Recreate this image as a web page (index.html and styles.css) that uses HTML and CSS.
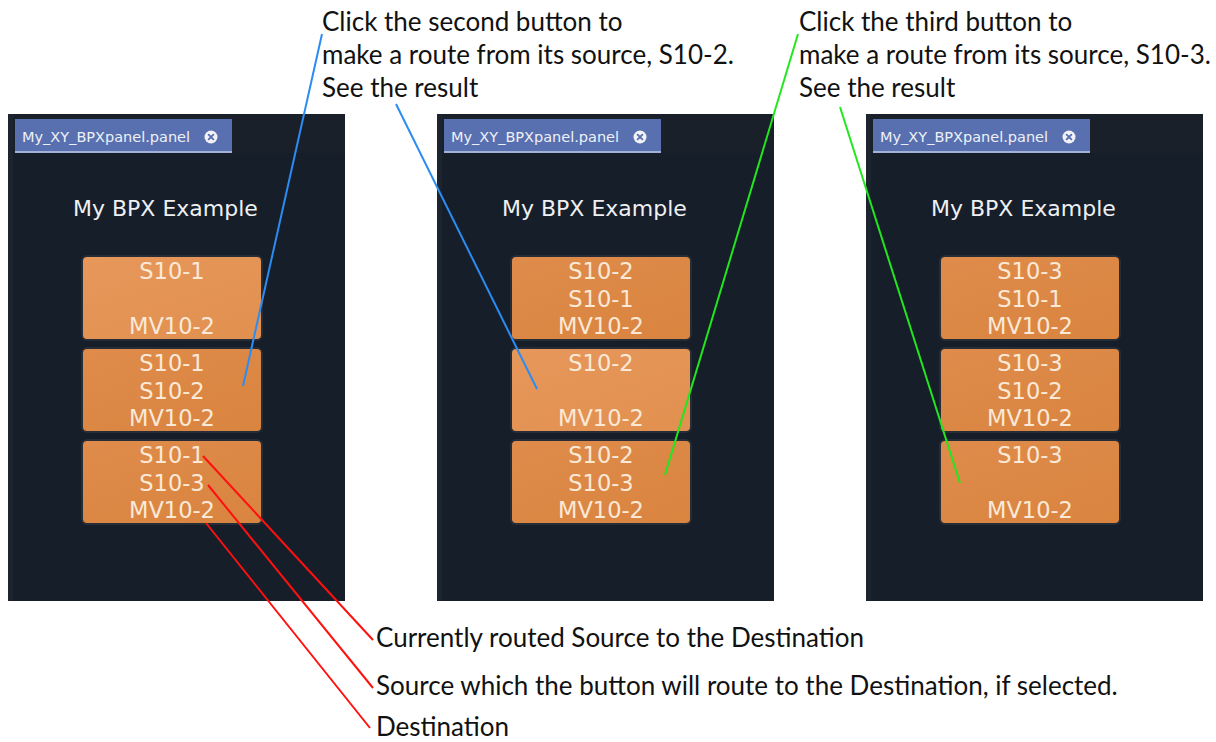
FILE: index.html
```html
<!DOCTYPE html>
<html lang="en">
<head>
    <meta charset="UTF-8">
    <meta name="viewport" content="width=device-width, initial-scale=1.0">
    <title>My BPX Example</title>
    <link rel="stylesheet" href="styles.css">
</head>
<body>
    <div class="page">
        <div class="notes">
            <div class="note note-second">Click the second button to<br>make a route from its source, S10-2.<br>See the result</div>
            <div class="note note-third">Click the third button to<br>make a route from its source, S10-3.<br>See the result</div>
        </div>

        <div class="panels">
            <div class="panel">
                <div class="tabbar">
                    <div class="tab">My_XY_BPXpanel.panel <span class="close"><svg width="14" height="14" viewBox="0 0 14 14"><circle cx="7" cy="7" r="6.5" fill="#f2f2f6"/><path d="M4.6 4.6 9.4 9.4M9.4 4.6 4.6 9.4" stroke="#5870b0" stroke-width="1.8" stroke-linecap="round"/></svg></span></div>
                </div>
                <div class="body">
                    <div class="title">My BPX Example</div>
                    <div class="btn light"><div>S10-1</div><div></div><div>MV10-2</div></div>
                    <div class="btn"><div>S10-1</div><div>S10-2</div><div>MV10-2</div></div>
                    <div class="btn"><div>S10-1</div><div>S10-3</div><div>MV10-2</div></div>
                </div>
            </div>
            <div class="panel">
                <div class="tabbar">
                    <div class="tab">My_XY_BPXpanel.panel <span class="close"><svg width="14" height="14" viewBox="0 0 14 14"><circle cx="7" cy="7" r="6.5" fill="#f2f2f6"/><path d="M4.6 4.6 9.4 9.4M9.4 4.6 4.6 9.4" stroke="#5870b0" stroke-width="1.8" stroke-linecap="round"/></svg></span></div>
                </div>
                <div class="body">
                    <div class="title">My BPX Example</div>
                    <div class="btn"><div>S10-2</div><div>S10-1</div><div>MV10-2</div></div>
                    <div class="btn light"><div>S10-2</div><div></div><div>MV10-2</div></div>
                    <div class="btn"><div>S10-2</div><div>S10-3</div><div>MV10-2</div></div>
                </div>
            </div>
            <div class="panel">
                <div class="tabbar">
                    <div class="tab">My_XY_BPXpanel.panel <span class="close"><svg width="14" height="14" viewBox="0 0 14 14"><circle cx="7" cy="7" r="6.5" fill="#f2f2f6"/><path d="M4.6 4.6 9.4 9.4M9.4 4.6 4.6 9.4" stroke="#5870b0" stroke-width="1.8" stroke-linecap="round"/></svg></span></div>
                </div>
                <div class="body">
                    <div class="title">My BPX Example</div>
                    <div class="btn"><div>S10-3</div><div>S10-1</div><div>MV10-2</div></div>
                    <div class="btn"><div>S10-3</div><div>S10-2</div><div>MV10-2</div></div>
                    <div class="btn"><div>S10-3</div><div></div><div>MV10-2</div></div>
                </div>
            </div>
        </div>

        <div class="labels">
            <div class="label label-current">Currently routed Source to the Destination</div>
            <div class="label label-source">Source which the button will route to the Destination, if selected.</div>
            <div class="label label-dest">Destination</div>
        </div>

        <!-- callout lines -->
        <svg class="callouts" width="1216" height="742" viewBox="0 0 1216 742">
            <g stroke-width="2" fill="none">
                <line x1="322" y1="34" x2="243" y2="386" stroke="#2b8cf4"/>
                <line x1="396" y1="104" x2="537" y2="389" stroke="#2b8cf4"/>
                <line x1="798" y1="34" x2="665" y2="475" stroke="#22e61e"/>
                <line x1="840" y1="107" x2="960" y2="483" stroke="#22e61e"/>
                <line x1="203" y1="456" x2="373" y2="640" stroke="#ff1010"/>
                <line x1="208" y1="485" x2="373" y2="688" stroke="#ff1010"/>
                <line x1="206" y1="523" x2="370" y2="728" stroke="#ff1010"/>
            </g>
        </svg>
    </div>
</body>
</html>
```

FILE: styles.css
```css
body{
    margin: 0;
    background-color: #ffffff;
    font-family: "Lato", "Noto Sans", sans-serif;
    color: #111111;
}
.page{
    position: relative;
    width: 1216px;
    height: 742px;
    overflow: hidden;
}
.notes{
    display: flex;
    height: 114px;
    padding-top: 5px;
    box-sizing: border-box;
}
.note{
    font-size: 26px;
    line-height: 33px;
    white-space: nowrap;
}
.note-second{
    margin-left: 322px;
    width: 477px;
}
.panels{
    display: flex;
    gap: 92px;
    padding-left: 8px;
}
.panel{
    width: 337px;
    height: 487px;
    background-color: #161e2a;
    border-left: 5px solid #1c2430;
    box-sizing: border-box;
    font-family: "DejaVu Sans", sans-serif;
}
.tabbar{
    height: 39px;
    background-color: #1a2029;
    padding: 5px 0 0 2px;
    box-sizing: border-box;
}
.tab{
    display: flex;
    align-items: center;
    width: 217px;
    height: 34px;
    padding: 3px 0 0 7px;
    box-sizing: border-box;
    background-color: #5870b0;
    border-bottom: 2px solid #a3b3d8;
    color: #eef0f7;
    font-size: 14.5px;
    white-space: pre;
}
.close{
    display: flex;
    margin-left: 9px;
}
.body{
    padding-top: 42px;
    padding-left: 70px;
}
.title{
    width: 184px;
    margin-left: -10px;
    font-size: 22px;
    line-height: 27px;
    color: #eef0f2;
    margin-bottom: 35px;
    white-space: nowrap;
}
.btn{
    width: 178px;
    height: 82px;
    margin-bottom: 10px;
    background: linear-gradient(160deg, #df8b4b, #d9843f);
    border-radius: 4px;
    box-shadow: 0 0 0 2px #262d36;
    color: #fbe9d8;
    font-size: 22.5px;
    line-height: 28px;
    text-align: center;
}
.btn div{
    height: 27.5px;
}
.btn.light{
    background: linear-gradient(160deg, #e6975a, #e1904f);
}
.labels{
    display: flex;
    flex-direction: column;
    padding-left: 376px;
}
.label{
    font-size: 26px;
    line-height: 31px;
    white-space: nowrap;
}
.label-current{
    margin-top: 21px;
}
.label-source{
    margin-top: 17px;
}
.label-dest{
    margin-top: 10px;
}
.callouts{
    position: absolute;
    left: 0;
    top: 0;
    pointer-events: none;
}
```
